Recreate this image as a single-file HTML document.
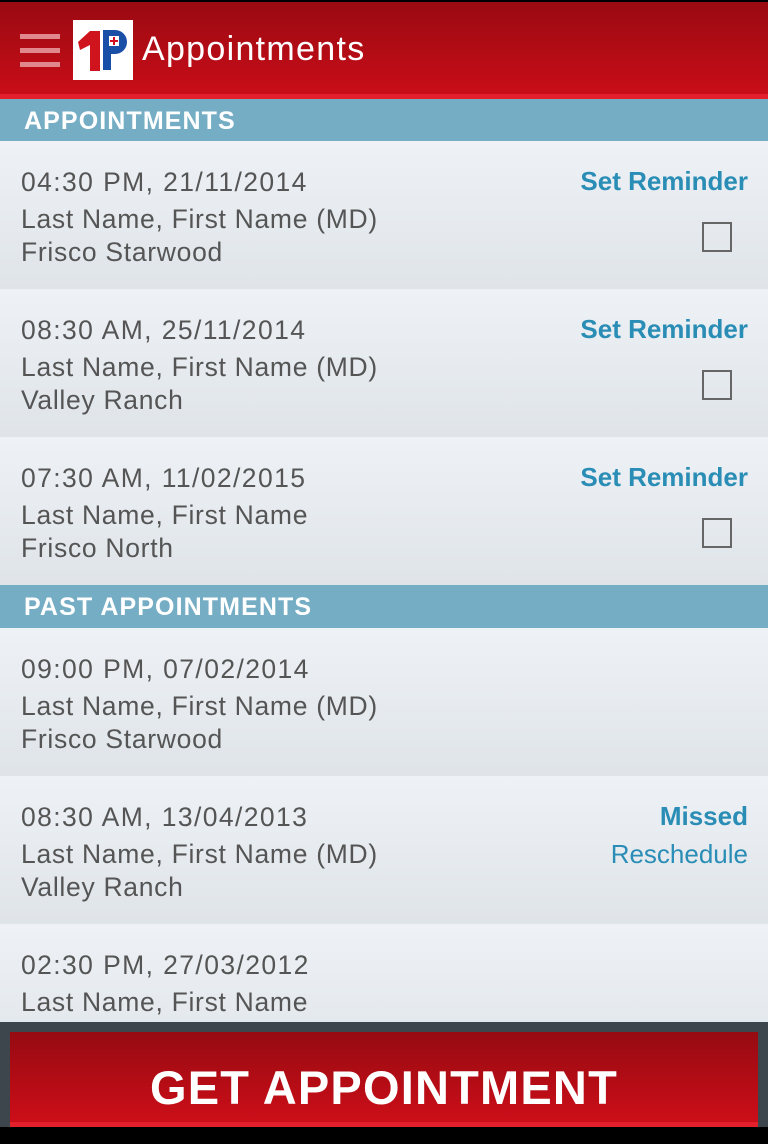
<!DOCTYPE html><html><head><style>
body{margin:0;width:768px;height:1139px;overflow:hidden;background:#000;font-family:"Liberation Sans",sans-serif;position:relative}
.hdr{position:absolute;top:2px;left:0;width:768px;height:92px;background:linear-gradient(#9a0a12,#c80d18);border-bottom:5px solid #e3202c}
.sec{position:absolute;left:0;width:768px;height:43px;background:#75adc4;color:#fff;font-weight:bold;font-size:25px;line-height:45px;padding-left:24px;box-sizing:border-box;letter-spacing:1.1px}
.row{position:absolute;left:0;width:768px;height:148px;background:linear-gradient(#eef2f6,#dfe4e9);color:#555;font-size:26.5px;letter-spacing:0.7px}
.row div{position:absolute;left:21px}
.t1{top:26px;letter-spacing:1.4px}.t2{top:63px}.t3{top:96px}
.sr{position:absolute;right:20px;top:25px;color:#2a8db5;font-weight:bold;font-size:26px;letter-spacing:0}
.cb{position:absolute;right:36px;top:81px;width:30px;height:30px;border:2px solid #666;box-sizing:border-box}
</style></head><body>
<div class="hdr">
<div style="position:absolute;left:20px;top:32px;width:40px;height:5px;background:#e0888c"></div>
<div style="position:absolute;left:20px;top:46px;width:40px;height:5px;background:#e0888c"></div>
<div style="position:absolute;left:20px;top:60px;width:40px;height:5px;background:#e0888c"></div>
<div style="position:absolute;left:73px;top:18px;width:60px;height:60px;background:#fff">
<svg width="60" height="60"><path d="M30 10h12a12 12 0 0 1 0 24h-4v16h-8z" fill="#1a4fa8"/><rect x="36" y="16" width="10" height="10" fill="#fff"/><path d="M41 17v8M37 21h8" stroke="#d01020" stroke-width="2"/><path d="M5 22l12-11h10v40h-10v-26l-10 5z" fill="#d0141e"/></svg></div>
<div style="position:absolute;left:142px;top:28px;color:#fff;font-size:34px;letter-spacing:1.3px">Appointments</div>
</div>
<div class="sec" style="top:99px">APPOINTMENTS</div>
<div class="row" style="top:141px"><div class="t1">04:30 PM, 21/11/2014</div><div class="t2">Last Name, First Name (MD)</div><div class="t3">Frisco Starwood</div><span class="sr">Set Reminder</span><span class="cb"></span></div>
<div class="row" style="top:289px"><div class="t1">08:30 AM, 25/11/2014</div><div class="t2">Last Name, First Name (MD)</div><div class="t3">Valley Ranch</div><span class="sr">Set Reminder</span><span class="cb"></span></div>
<div class="row" style="top:437px"><div class="t1">07:30 AM, 11/02/2015</div><div class="t2">Last Name, First Name</div><div class="t3">Frisco North</div><span class="sr">Set Reminder</span><span class="cb"></span></div>
<div class="sec" style="top:585px">PAST APPOINTMENTS</div>
<div class="row" style="top:628px"><div class="t1">09:00 PM, 07/02/2014</div><div class="t2">Last Name, First Name (MD)</div><div class="t3">Frisco Starwood</div></div>
<div class="row" style="top:776px"><div class="t1">08:30 AM, 13/04/2013</div><div class="t2">Last Name, First Name (MD)</div><div class="t3">Valley Ranch</div><span class="sr">Missed</span><span class="sr" style="top:63px;font-weight:normal">Reschedule</span></div>
<div class="row" style="top:924px"><div class="t1">02:30 PM, 27/03/2012</div><div class="t2">Last Name, First Name</div></div>
<div style="position:absolute;top:1022px;left:0;width:768px;height:105px;background:#3d454d"></div>
<div style="position:absolute;top:1032px;left:10px;width:748px;height:90px;background:linear-gradient(#960a12,#cc0e18);border-bottom:5px solid #e3202c;color:#fff;font-weight:bold;font-size:47px;text-align:center;line-height:112px;letter-spacing:1.2px">GET APPOINTMENT</div>
</body></html>
